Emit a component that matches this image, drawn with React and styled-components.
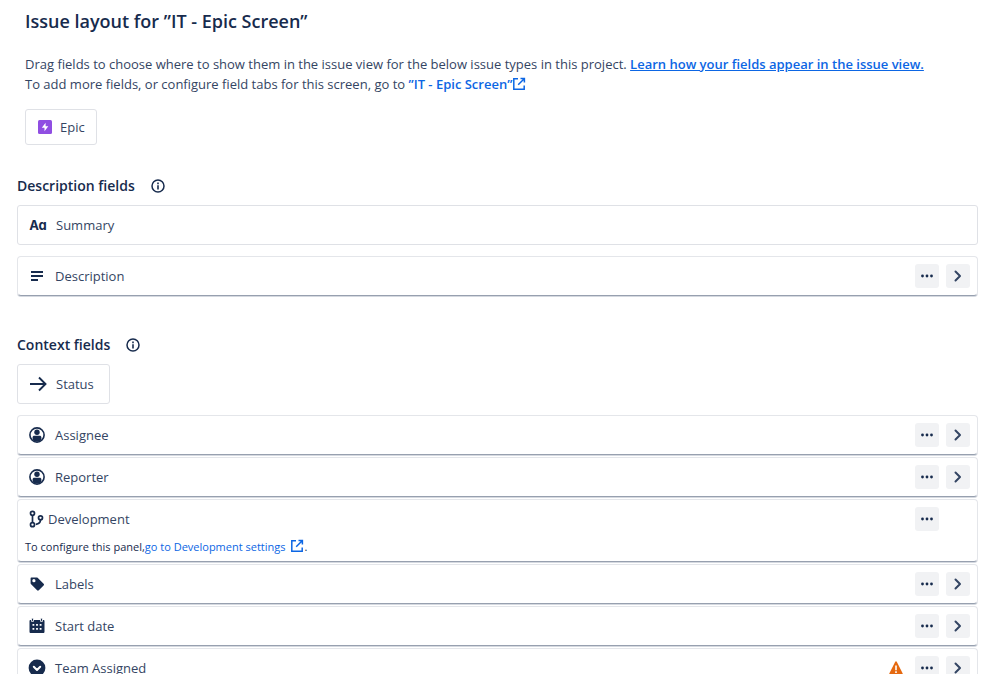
import React from 'react';
import styled, { createGlobalStyle } from 'styled-components';

const GlobalStyle = createGlobalStyle`
* {
    box-sizing: border-box;
}

body {
    margin: 0;
    background: #ffffff;
    color: #172b4d;
    font-family: "Open Sans", "Noto Sans", sans-serif;
    font-size: 13px;
    line-height: 20px;
}
`;

const ExternalIcon = () => (
    <svg width="14" height="14" viewBox="0 0 14 14" fill="none" stroke="currentColor" strokeWidth="1.5" aria-hidden="true">
        <path d="M6 1.800H1.800v10.400h10.400V8.500" />
        <path d="M8.500 1.600h3.900v3.900M12.200 1.800L6.200 7.800" />
    </svg>
);

const InfoIcon = () => (
    <svg width="14" height="14" viewBox="0 0 14 14" aria-hidden="true">
        <circle cx="7" cy="7" r="6" fill="none" stroke="#172b4d" strokeWidth="1.5" />
        <path d="M6.200 3.600h1.600v1.700H6.200zM6.200 6.200h1.600v4.200H6.200z" fill="#172b4d" />
    </svg>
);

const EpicIcon = () => (
    <svg width="14" height="14" viewBox="0 0 14 14" aria-hidden="true">
        <rect width="14" height="14" rx="1.5" fill="#904ee2" />
        <path d="M7.600 2.800v3.400h2.700L6.500 11.300V7.800H3.800z" fill="#ffffff" />
    </svg>
);

const LinesIcon = () => (
    <svg width="18" height="18" viewBox="0 0 18 18" fill="#172b4d" aria-hidden="true">
        <path d="M3 4h12v2H3zM3 8h12v2H3zM3 12h7v2H3z" />
    </svg>
);

const ArrowIcon = () => (
    <svg width="18" height="18" viewBox="0 0 18 18" fill="none" stroke="#172b4d" strokeWidth="1.9" aria-hidden="true">
        <path d="M1 9h15M10 2.500L16.500 9L10 15.500" />
    </svg>
);

const PersonIcon = () => (
    <svg width="18" height="18" viewBox="0 0 18 18" aria-hidden="true">
        <circle cx="9" cy="9" r="7.100" fill="#ffffff" stroke="#172b4d" strokeWidth="1.600" />
        <circle cx="9" cy="6.200" r="2.700" fill="#172b4d" />
        <path d="M4.600 14V11.400c0-1 .7-1.700 1.700-1.700h5.400c1 0 1.700.7 1.700 1.700V14C10.800 16 7.200 16 4.600 14z" fill="#172b4d" />
    </svg>
);

const BranchIcon = () => (
    <svg width="18" height="18" viewBox="0 0 18 18" fill="none" stroke="#172b4d" strokeWidth="1.700" aria-hidden="true">
        <circle cx="4.500" cy="3.300" r="2" />
        <circle cx="4.500" cy="14.700" r="2" />
        <circle cx="12.500" cy="7.800" r="2" />
        <path d="M4.500 5.300v7.400M12.500 9.800c0 3-2 4.200-4.700 4.500" />
    </svg>
);

const TagIcon = () => (
    <svg width="18" height="18" viewBox="0 0 18 18" aria-hidden="true">
        <path d="M3.300 2.400h5.200c.5 0 .8.1 1.100.4l6 6c.6.600.6 1.100 0 1.700l-4.800 4.800c-.6.6-1.100.6-1.700 0l-6-6c-.3-.3-.5-.7-.5-1.100V3.300c0-.5.2-.9.700-.9z" fill="#172b4d" />
        <circle cx="5.900" cy="5.700" r="1.600" fill="#ffffff" />
    </svg>
);

const CalendarIcon = () => (
    <svg width="18" height="18" viewBox="0 0 18 18" aria-hidden="true">
        <path d="M2.600 3h12.800c.7 0 1.100.4 1.100 1.100v10.700c0 .8-.5 1.300-1.300 1.300H2.800c-.8 0-1.300-.5-1.300-1.300V4.100c0-.7.4-1.100 1.100-1.100z" fill="#172b4d" />
        <path d="M3.500 1.200h2v3.200h-2zM12.500 1.200h2v3.200h-2z" fill="#172b4d" stroke="#ffffff" strokeWidth=".8" />
        <path d="M4.500 7h1.800v1.800H4.500zM8.100 7h1.800v1.800H8.100zM11.700 7h1.800v1.800h-1.800zM4.500 11h1.800v1.800H4.500zM8.100 11h1.800v1.800H8.100zM11.700 11h1.800v1.800h-1.800z" fill="#ffffff" />
    </svg>
);

const SelectIcon = () => (
    <svg width="18" height="18" viewBox="0 0 18 18" aria-hidden="true">
        <circle cx="9" cy="9" r="8.400" fill="#172b4d" />
        <path d="M5.800 7.800L9 11l3.200-3.200" fill="none" stroke="#ffffff" strokeWidth="2" strokeLinecap="round" strokeLinejoin="round" />
    </svg>
);

const WarningIcon = () => (
    <svg width="14" height="14" viewBox="0 0 14 14" aria-hidden="true">
        <path d="M6.100.9c.4-.8 1.400-.8 1.800 0l5.700 11.300c.3.700 0 1.300-.8 1.300H1.200c-.8 0-1.100-.6-.8-1.300z" fill="#e56910" />
        <path d="M6.200 4.400h1.600v4.800H6.200zM6.200 10.200h1.600v1.700H6.200z" fill="#ffffff" />
    </svg>
);

const MoreIcon = () => (
    <svg width="16" height="16" viewBox="0 0 16 16" fill="#172b4d" aria-hidden="true">
        <circle cx="3.500" cy="8" r="1.400" />
        <circle cx="8" cy="8" r="1.400" />
        <circle cx="12.500" cy="8" r="1.400" />
    </svg>
);

const ChevronIcon = () => (
    <svg width="16" height="16" viewBox="0 0 16 16" fill="none" stroke="#344563" strokeWidth="2" strokeLinecap="round" strokeLinejoin="round" aria-hidden="true">
        <path d="M5.500 3.500L10 8L5.500 12.500" />
    </svg>
);

const fields = [
    { name: 'Assignee', icon: <PersonIcon /> },
    { name: 'Reporter', icon: <PersonIcon /> },
    { name: 'Development', icon: <BranchIcon />, panel: true },
    { name: 'Labels', icon: <TagIcon /> },
    { name: 'Start date', icon: <CalendarIcon /> },
    { name: 'Team Assigned', icon: <SelectIcon />, warning: true },
];

const FieldRow = ({ name, icon, panel, warning }) => (
    <FieldCard>
        <FieldHead $tight={panel}>
            <FieldIcon>{icon}</FieldIcon>
            <FieldName>{name}</FieldName>
            <Actions>
                {warning && <WarningIcon />}
                <IconButton type="button" aria-label={`More actions for ${name}`}><MoreIcon /></IconButton>
                {panel ? <ActionSpace /> : (
                    <IconButton type="button" aria-label={`Expand ${name}`}><ChevronIcon /></IconButton>
                )}
            </Actions>
        </FieldHead>
        {panel && (
            <PanelNote>
                To configure this panel,
                <NoteLink href="#development">go to Development settings <ExternalIcon /></NoteLink>.
            </PanelNote>
        )}
    </FieldCard>
);

const App = () => {
    return (
        <>
            <GlobalStyle />
            <Page>
                <Header>
                    <Title>Issue layout for ”IT - Epic Screen”</Title>
                    <Intro>
                        Drag fields to choose where to show them in the issue view for the below issue types in this project.{' '}
                        <LearnLink href="#learn">Learn how your fields appear in the issue view.</LearnLink>
                        <br />
                        To add more fields, or configure field tabs for this screen, go to{' '}
                        <ScreenLink href="#screen">”IT - Epic Screen”<ExternalIcon /></ScreenLink>
                    </Intro>
                    <IssueType><EpicIcon />Epic</IssueType>
                </Header>
                <Section>
                    <SectionTitle>Description fields <InfoIcon /></SectionTitle>
                    <FixedCard>
                        <FieldIcon><TextIcon>Aa</TextIcon></FieldIcon>
                        <FieldName>Summary</FieldName>
                    </FixedCard>
                    <FieldRow name="Description" icon={<LinesIcon />} />
                </Section>
                <Section>
                    <SectionTitle>Context fields <InfoIcon /></SectionTitle>
                    <FixedCard $fit>
                        <FieldIcon><ArrowIcon /></FieldIcon>
                        <FieldName>Status</FieldName>
                    </FixedCard>
                    <FieldList>
                        {fields.map((field) => <FieldRow key={field.name} {...field} />)}
                    </FieldList>
                </Section>
            </Page>
        </>
    );
};

const Page = styled.main`
height: calc(100vh - 20px);
overflow: hidden;
padding: 8px 20px 0 17px;
`;

const Header = styled.header`
padding-left: 8px;
margin-bottom: 30px;
`;

const Title = styled.h1`
margin: 0 0 19px;
font-size: 18px;
font-weight: 600;
line-height: 27px;
`;

const Intro = styled.p`
margin: 0 0 15px;
color: #344563;
`;

const LearnLink = styled.a`
color: #0c66e4;
font-weight: 600;
text-decoration: underline;
`;

const ScreenLink = styled.a`
color: #0c66e4;
font-weight: 600;
text-decoration: none;

svg {
    vertical-align: -2px;
}
`;

const IssueType = styled.div`
display: inline-flex;
align-items: center;
gap: 8px;
height: 36px;
padding: 0 11px 0 12px;
border: 1px solid #dfe1e6;
border-radius: 3px;
color: #344563;
vertical-align: top;
`;

const Section = styled.section`
margin-bottom: 38px;
`;

const SectionTitle = styled.h2`
display: flex;
align-items: center;
gap: 16px;
margin: 0 0 9px;
font-size: 14px;
font-weight: 600;
line-height: 21px;
`;

const FixedCard = styled.div`
display: ${({ $fit }) => ($fit ? 'inline-flex' : 'flex')};
align-items: center;
gap: 9px;
height: 40px;
margin-bottom: 11px;
padding: 0 15px 0 11px;
border: 1px solid #dfe1e6;
border-radius: 3px;
vertical-align: top;
`;

const FieldList = styled.div`
display: flex;
flex-direction: column;
gap: 2px;
`;

const FieldCard = styled.div`
border: 1px solid #e4e6ea;
border-bottom-color: #97a0af;
border-radius: 4px;
box-shadow: 0 1px 0 #d5d9e0;
`;

const FieldHead = styled.div`
display: flex;
align-items: center;
gap: ${({ $tight }) => ($tight ? '2px' : '9px')};
height: 38px;
padding: 0 7px 0 10px;
`;

const FieldIcon = styled.span`
display: flex;
align-items: center;
justify-content: center;
width: 18px;
height: 18px;
`;

const TextIcon = styled.span`
font-family: Inter, sans-serif;
font-size: 13px;
font-weight: 700;
font-feature-settings: "cv11";
`;

const FieldName = styled.span`
color: #344563;
`;

const Actions = styled.div`
display: flex;
align-items: center;
gap: 7px;
margin-left: auto;

> svg {
    margin-right: 5px;
}
`;

const ActionSpace = styled.span`
width: 24px;
`;

const IconButton = styled.button`
display: flex;
align-items: center;
justify-content: center;
width: 24px;
height: 24px;
padding: 0;
border: 0;
border-radius: 3px;
background: #f1f2f4;
cursor: pointer;
`;

const PanelNote = styled.p`
margin: 0;
padding: 0 7px 5px;
font-size: 11px;
line-height: 18px;
`;

const NoteLink = styled.a`
color: #0c66e4;
text-decoration: none;

svg {
    margin-left: 2px;
    vertical-align: -2px;
}
`;

export default App;
